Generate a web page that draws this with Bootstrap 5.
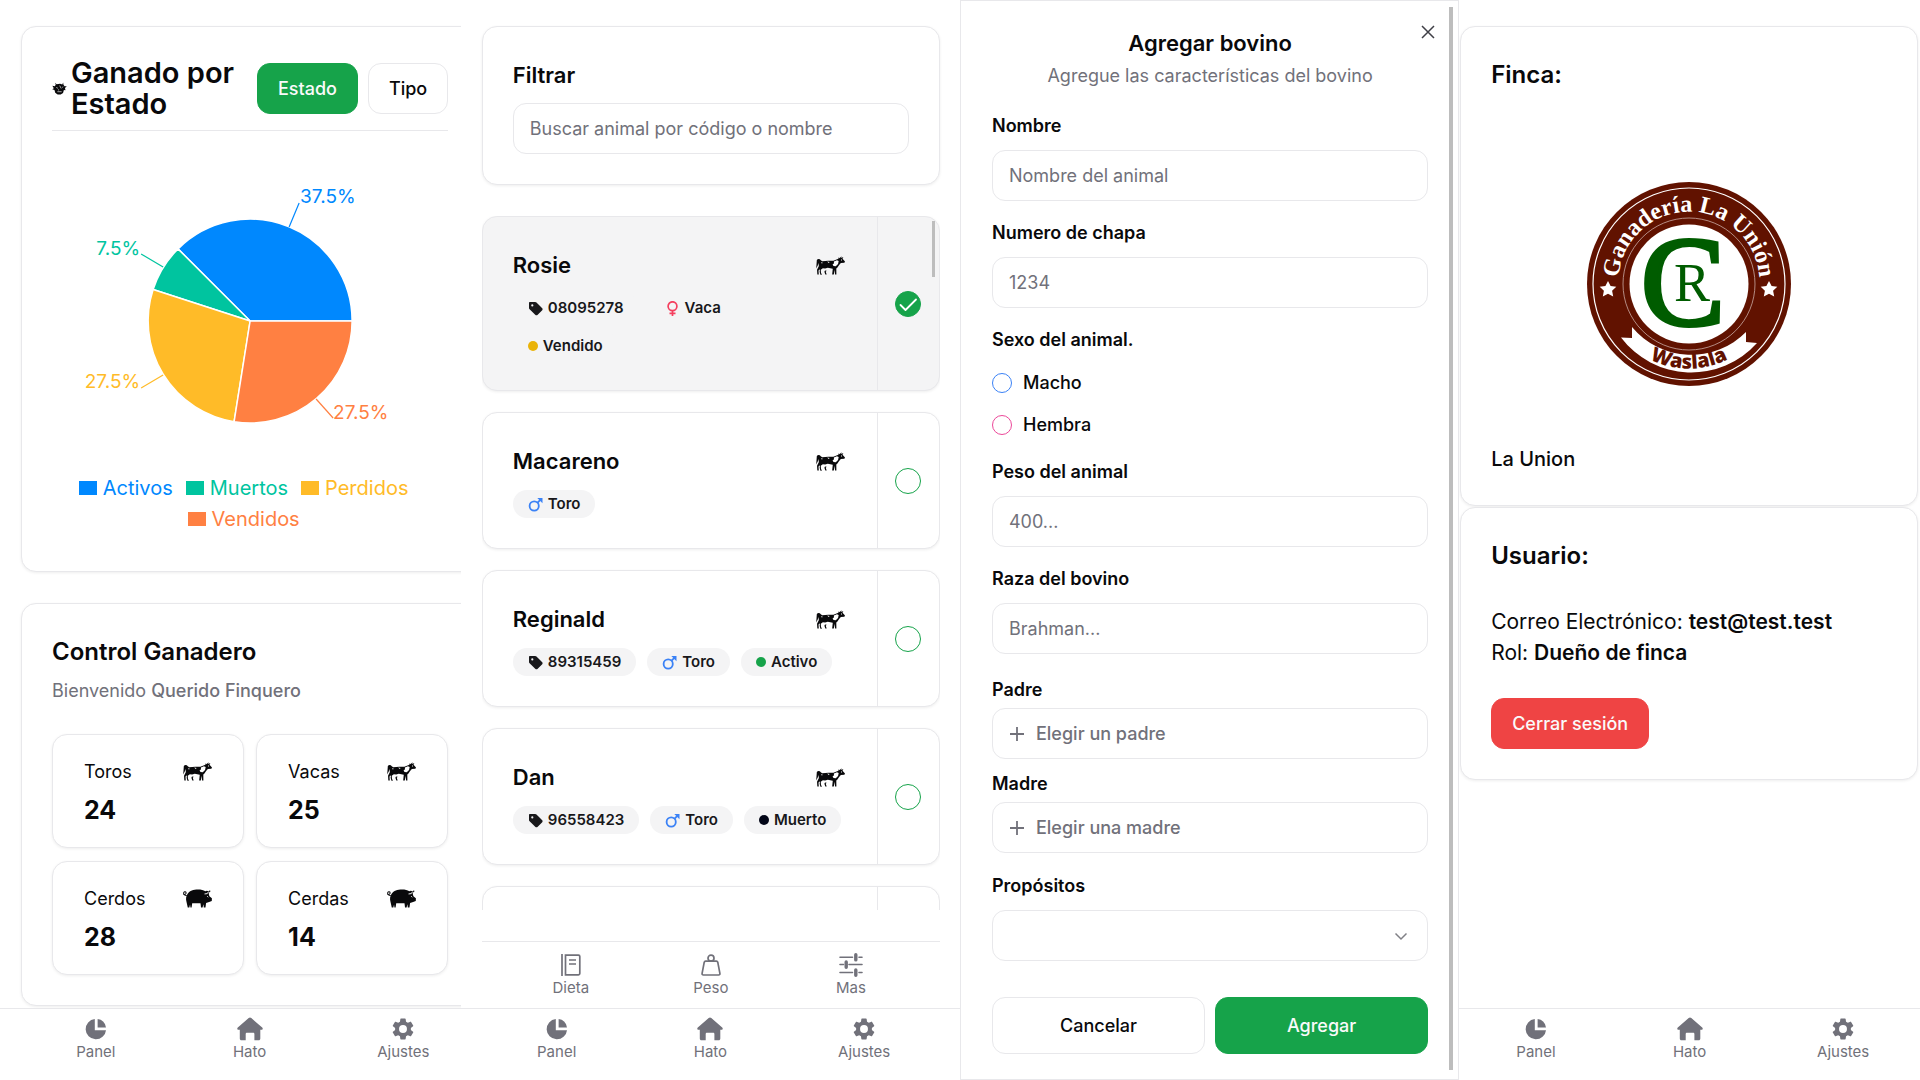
<!DOCTYPE html>
<html lang="es">
<head>
<meta charset="utf-8">
<meta name="viewport" content="width=device-width, initial-scale=1">
<title>Control Ganadero</title>
<link href="https://cdn.jsdelivr.net/npm/bootstrap@5.3.0/dist/css/bootstrap.min.css" rel="stylesheet">
<style>
:root{--ink:#09090b;--muted:#71717a;--line:#e8e8eb;--green:#16a34a;--soft:#f4f4f5}
body{font-family:Inter,"Liberation Sans",sans-serif;font-size:20px;line-height:31px;color:var(--ink);background:#fff}
.board{height:100vh;overflow:hidden}
.phone{height:100vh;overflow:hidden;flex:none;position:relative}
.phone-edge{width:24%}
.phone-full{width:26%}
.phone-edge>.clipped{width:108.34%}
.stack{padding:26px 20px 0 21px}
.panel{border:1px solid var(--line);border-radius:15px;background:#fff;box-shadow:0 1px 3px rgba(0,0,0,.07)}
.panel-pad{padding:30px}
.panel-next{margin-top:31px}
h1,h2,h3,p{margin:0}
.t-xl{font-size:29px;line-height:31px;font-weight:600}
.t-lg{font-size:24px;line-height:36px;font-weight:600}
.t-md{font-size:22px;line-height:36px;font-weight:600}
.t-sm{font-size:18px;line-height:25px}
.soft-text{color:var(--muted)}
.btn{--bs-btn-font-size:18px;--bs-btn-line-height:25px;--bs-btn-font-weight:500;--bs-btn-padding-x:20px;--bs-btn-padding-y:12px;--bs-btn-border-radius:13px}
.btn-main{--bs-btn-bg:var(--green);--bs-btn-color:#fafafa;--bs-btn-border-color:var(--green)}
.btn-plain{--bs-btn-bg:#fff;--bs-btn-color:#09090b;--bs-btn-border-color:var(--line)}
.btn-out{--bs-btn-bg:#ef4444;--bs-btn-color:#fafafa;--bs-btn-border-color:#ef4444;margin-top:30px}
.btn-tall{--bs-btn-padding-y:15px}
.pair{gap:10px}
.rule{border-bottom:1px solid var(--line);padding-bottom:11px}
.legend{font-size:20px;line-height:31px;padding:0 20px 6px}
.legend span{margin-right:13px}
.swatch{width:18px;height:14px;display:inline-block;margin-right:6px}
.tiles{display:grid;grid-template-columns:1fr 1fr;gap:13px 12px;margin-top:31px}
.tile{padding:24px 31px 19px}
.tile b{font-size:25px;line-height:36px;font-weight:700;display:block;margin-top:8px}
.tabs{border-top:1px solid var(--line);height:72px;padding:8px 19px 0;background:#fff}
.tabs-fit{padding-left:0;padding-right:0}
.tabs a{flex:1;color:var(--muted);font-size:15px;line-height:20px;text-decoration:none;text-align:center}
.tabs svg{display:block;margin:0 auto 1px}
.form-control,.form-select{border:1px solid var(--line);border-radius:13px;height:51px;padding:0 16px;font-size:18px;line-height:25px;color:var(--ink);background-color:#fff}
.form-control::placeholder{color:var(--muted);opacity:1}
.filter{margin-bottom:31px}
.filter label{display:block;margin-bottom:10px}
.herd{overflow:hidden;flex:1 1 0;min-height:0;position:relative}
.animal{margin-bottom:21px}
.animal-body{flex:1;padding:30px 32px 30px 30px}
.animal-pick{width:62px;border-left:1px solid var(--line)}
.picked{background:var(--soft)}
.form-check-input.pick{width:26px;height:26px;margin:0;border:1px solid var(--green);border-radius:50%;float:none}
.form-check-input.pick:checked{background-color:var(--green);background-size:26px;background-image:url("data:image/svg+xml,%3Csvg xmlns='http://www.w3.org/2000/svg' viewBox='0 0 26 26'%3E%3Cpath d='M5.500 14l5 5L21 8.500' fill='none' stroke='%23fff' stroke-width='1.800' stroke-linecap='round' stroke-linejoin='round'/%3E%3C/svg%3E")}
.chips{gap:10px 11px;margin-top:11px}
.chip{background:var(--soft);border-radius:14px;height:28px;padding:0 15px;font-size:15px;line-height:28px;font-weight:600;color:#18181b;display:flex;align-items:center;gap:5px}
.dot{width:10px;height:10px;border-radius:50%}
.thumb{position:absolute;width:3px;background:#bdbdbd}
.thumb-list{right:5px;top:5px;height:56px}
.thumb-form{right:5px;top:6px;bottom:9px;width:4px}
.subtabs{margin:31px 20px 0 21px;height:67px;padding-top:11px}
.sheet{border:1px solid var(--line);padding:24px 30px 0 31px}
.sheet-head{margin-bottom:25px}
.sheet-head p{margin-top:2px}
.close-x{position:absolute;right:19px;top:20px;padding:4px;border:0;background:none;line-height:0;color:#3f3f46}
.field{margin-bottom:19px}
.field label,.field legend,.field-tight label{display:block;font-size:18px;line-height:25px;font-weight:600;margin:0 0 12px}
.field-tight{margin-bottom:12px}
.field-tight label{margin-bottom:6px}
.parents{padding:4px 0 8px}
.picker{color:var(--muted);text-align:left;display:flex;align-items:center;gap:11px;width:100%;font-weight:500}
.form-select{background-image:url("data:image/svg+xml,%3Csvg xmlns='http://www.w3.org/2000/svg' viewBox='0 0 14 14'%3E%3Cpath d='M1.500 4.500l5.500 5.500 5.500-5.500' fill='none' stroke='%23808086' stroke-width='1.500'/%3E%3C/svg%3E");background-size:14px;background-position:right 19px center}
.sexes label{font-weight:500;margin:0}
.sexes{display:grid;gap:17px;padding:6px 0 3px}
.sexes>div{gap:11px}
.form-check-input.sex{width:20px;height:20px;margin:0;border:1px solid #3b82f6}
.form-check-input.sex-f{border-color:#ec4899}
.actions{margin-top:36px}
.farm{padding:26px 2px 0 1px}
.farm .panel{margin-bottom:1px}
.crest{display:block;margin:88px auto 57px}
.strong-name{font-weight:500}
.account{font-size:21px;margin-top:32px}
</style>
</head>
<body>
<svg width="0" height="0" class="position-absolute" aria-hidden="true">
  <symbol id="cow" viewBox="0 0 28 18">
    <path fill="currentColor" d="M.8 3.600C1.800 2.400 3.800 2.600 4.600 3.900L6 4.800l5.800-.4 5-.1 4.800-1.800.4-1.500.8 1L24.600 0l-.2 1.800L26.400.8l-.8 1.700L28 5.200l-.6 1.200-3.400.1-1.700 2.100-1.600 2.300-1.100 1.100.1 5.800h-1.300l-.5-4.800-.7 4.800h-1.600l.6-5.700-4.800-1-2.600.9-2.200-.4-2 1.600.2 2.800.9 2H4.300L3.500 15l.4-2.500-1.500 1.400.3 3.900H1.300L1 13.200 2.800 9.600 2.200 6.500 1.700 9 .2 11.800z"/>
    <path fill="#fff" d="M17.300 5.200l2.900-1.200 1.700.7-.6 2.800-2.200 2.300-2.200-.3-.9-1.700 1.300-.8zM4.800 5.800l1.600.2-.6 1.200zM10.800 5.200l2.400.4-1 1z"/>
    <path fill="currentColor" d="M8.700 13.800l1.700.3-1 1 .9 2.700H9l-.9-2.700z"/>
    <path fill="#fff" d="M24.200 3.300h.9v.8h-.9z"/>
  </symbol>
  <symbol id="pig" viewBox="0 0 28 18">
    <path fill="currentColor" d="M4.500 4.500C6.500 1.200 10 .2 14.500.2c3 0 5.300.6 7 1.700l1.500-.3 2.400.6-.6 2.200.7 2.500 2.400 1.800-.1 2.800-2.600.9-2.900 1-.6 4.300h-1.600l-.4-3.200-.8 3.200h-1.500l-.5-4.200-8 .1-.6 4.100H7.200l-.4-3-.7 3H4.600L3.300 12C2.600 9.200 2.900 6.700 4.500 4.500z"/>
    <path d="M3.600 6.200C1.500 6 .3 4.800.7 3.300 1.300 2 3.300 2.400 2.900 4c-.3 1-1.400 1.300-2.500 1.100M24.500 3l1.800-1.500" fill="none" stroke="currentColor"/>
    <path d="M20.800 4.600l2.600-.3 1.300-1.900M23.400 6.800l.9 1" fill="none" stroke="#fff" stroke-width=".9"/>
  </symbol>
  <symbol id="bull" viewBox="0 0 14 12">
    <path fill="currentColor" d="M.3 3.500L2.600 4 3.500 2.600 2.800.6 4.300 2 7.500 1.500l2.100.8L10.400.3l.3 2.300 1 1.300L13.800 4l-1.700 1.500.5 2.200-1.500-.4-.8 2.800-2.200 1.400H5.300L3 10 2.300 7.400.2 6.600l1.500-.9z"/>
    <path d="M4 5l1.500.8M7.200 3.300L8.600 6M9.500 5l1-.6M5 9h4M5.600 7.300h1" stroke="#fff" stroke-width=".6" fill="none"/>
  </symbol>
  <symbol id="pie" viewBox="0 0 22 22"><path fill="currentColor" d="M9.800 1v11.200H21A10.200 10.200 0 1 1 9.800 1z"/><path fill="currentColor" d="M12.600 1A9.200 9.200 0 0 1 21 9.400h-8.400z"/></symbol>
  <symbol id="home" viewBox="0 0 26 24"><path fill="currentColor" d="M11.700 1a2 2 0 0 1 2.600 0l10.900 9.600c1 .9.500 2.100-.8 2.100h-1.100v8.800c0 1.200-.6 1.800-1.700 1.800h-4.200v-6.100c0-.9-.5-1.400-1.300-1.400H10c-.8 0-1.300.5-1.300 1.400v6.100H4.500c-1.100 0-1.700-.6-1.700-1.800v-8.800H1.600c-1.300 0-1.800-1.200-.8-2.100z"/></symbol>
  <symbol id="gear" viewBox="2 2 20 20"><path fill="currentColor" d="M19.140 12.940c.04-.3.060-.61.060-.94s-.02-.64-.07-.94l2.030-1.580a.49.490 0 0 0 .12-.61l-1.920-3.320a.488.488 0 0 0-.59-.22l-2.390.96c-.5-.38-1.030-.7-1.620-.94l-.36-2.540a.484.484 0 0 0-.48-.41h-3.840c-.24 0-.43.17-.47.410l-.36 2.540c-.59.240-1.130.57-1.620.94l-2.390-.96c-.22-.08-.47 0-.59.220L2.740 8.870c-.12.210-.08.470.12.610l2.030 1.580c-.05.3-.09.630-.09.940s.02.640.07.940l-2.030 1.580a.49.490 0 0 0-.12.610l1.920 3.320c.12.220.37.290.59.220l2.390-.96c.5.380 1.030.7 1.620.94l.36 2.540c.05.240.24.410.48.410h3.840c.24 0 .44-.17.47-.41l.36-2.540c.59-.24 1.130-.56 1.620-.94l2.390.96c.22.080.47 0 .59-.22l1.920-3.320c.12-.22.070-.47-.12-.61zM12 15.600A3.600 3.600 0 1 1 12 8.400a3.600 3.600 0 0 1 0 7.200z"/></symbol>
  <symbol id="book" viewBox="0 0 20 22"><path d="M1 0v22M4.500 1.200h13c.8 0 1.300.5 1.300 1.300v17c0 .8-.5 1.300-1.300 1.300h-13zM8 6h7M8 10h7" fill="none" stroke="currentColor" stroke-width="1.700"/></symbol>
  <symbol id="weight" viewBox="0 0 20 22"><circle cx="10" cy="4.200" r="3" fill="none" stroke="currentColor" stroke-width="1.700"/><path d="M4.600 7.200h10.800c.7 0 1.200.4 1.400 1.100l2.100 11c.2 1-.3 1.700-1.300 1.700H2.400c-1 0-1.500-.7-1.300-1.700l2.100-11c.2-.7.700-1.100 1.400-1.100z" fill="none" stroke="currentColor" stroke-width="1.700" stroke-linejoin="round"/></symbol>
  <symbol id="sliders" viewBox="0 0 24 24"><path d="M1 4.300h12.500M20 4.300h3M1 11.500h3.500M10 11.500h13M1 19.500h12.500M20 19.500h3" stroke="currentColor" stroke-width="1.600" stroke-linecap="round"/><path d="M16.800 1.700v5.200M7.200 9v5.200M16.800 17v5.200" stroke="currentColor" stroke-width="3.400" stroke-linecap="round"/></symbol>
  <symbol id="tag" viewBox="0 0 15 15"><path fill="currentColor" fill-rule="evenodd" d="M2 1h5.200c.5 0 .9.200 1.300.5l5.500 5.400c.8.800.8 1.700 0 2.500l-4.300 4.300c-.8.800-1.700.8-2.500 0L1.600 8.300C1.200 7.900 1 7.500 1 7V2c0-.6.400-1 1-1zm2.300 2.300a1.100 1.100 0 1 0 0 2.200 1.100 1.100 0 0 0 0-2.200z"/></symbol>
  <symbol id="male" viewBox="0 0 15 15"><circle cx="6.200" cy="9" r="4.600" fill="none" stroke="#3b82f6" stroke-width="1.800"/><path d="M9.400 5.800L13 2.200" stroke="#3b82f6" stroke-width="1.800"/><path d="M9.300 1h5.200v5.200z" fill="#3b82f6"/></symbol>
  <symbol id="female" viewBox="0 0 15 15"><circle cx="7.500" cy="5.200" r="4.400" fill="none" stroke="#f43f5e" stroke-width="1.700"/><path d="M7.500 9.600V15M4.500 12.300h6" stroke="#f43f5e" stroke-width="1.700"/></symbol>
  <symbol id="plus" viewBox="0 0 16 16"><path d="M8 1v14M1 8h14" stroke="currentColor" stroke-width="1.800"/></symbol>
</svg>

<main class="board d-flex">

  <!-- Panel -->
  <section class="phone phone-edge">
    <div class="clipped h-100 d-flex flex-column">
      <div class="stack flex-grow-1">
        <div class="panel panel-pad">
          <div class="rule d-flex align-items-center">
            <svg class="flex-shrink-0 me-1" width="15" height="13"><use href="#bull"/></svg>
            <h1 class="t-xl flex-grow-1">Ganado por<br>Estado</h1>
            <div class="d-flex pair">
              <button class="btn btn-main" type="button">Estado</button>
              <button class="btn btn-plain" type="button">Tipo</button>
            </div>
          </div>
          <svg class="d-block mx-auto mt-5" width="100%" height="294" viewBox="0 0 396 294" font-family="Inter, sans-serif" font-size="19">
            <g transform="translate(198 142)" stroke="#fff" stroke-width="1.500" stroke-linejoin="round">
              <path fill="#0088fe" d="M0 0H102A102 102 0 0 0-72.100-72.100z"/>
              <path fill="#00c49f" d="M0 0L-72.100-72.100A102 102 0 0 0-97-31.500z"/>
              <path fill="#ffbb28" d="M0 0L-97-31.500A102 102 0 0 0-16 100.700z"/>
              <path fill="#ff8042" d="M0 0L-16 100.700A102 102 0 0 0 102 0z"/>
            </g>
            <g fill="none" stroke-width="1.200">
              <path stroke="#0088fe" d="M237 48l10-24"/>
              <path stroke="#00c49f" d="M111 88L89 75"/>
              <path stroke="#ffbb28" d="M111 196l-22 13"/>
              <path stroke="#ff8042" d="M264 220l17 19"/>
            </g>
            <text x="248" y="24" fill="#0088fe">37.5%</text>
            <text x="88" y="76" fill="#00c49f" text-anchor="end">7.5%</text>
            <text x="88" y="209" fill="#ffbb28" text-anchor="end">27.5%</text>
            <text x="281" y="240" fill="#ff8042">27.5%</text>
          </svg>
          <div class="legend d-flex flex-wrap justify-content-center">
            <span style="color:#0088fe"><i class="swatch" style="background:#0088fe"></i>Activos</span>
            <span style="color:#00c49f"><i class="swatch" style="background:#00c49f"></i>Muertos</span>
            <span style="color:#ffbb28"><i class="swatch" style="background:#ffbb28"></i>Perdidos</span>
            <span style="color:#ff8042"><i class="swatch" style="background:#ff8042"></i>Vendidos</span>
          </div>
        </div>
        <div class="panel panel-pad panel-next">
          <h2 class="t-lg">Control Ganadero</h2>
          <p class="t-sm soft-text mt-2">Bienvenido <span class="fw-medium">Querido Finquero</span></p>
          <div class="tiles">
            <div class="panel tile"><div class="d-flex justify-content-between align-items-center t-sm">Toros<svg width="29" height="19"><use href="#cow"/></svg></div><b>24</b></div>
            <div class="panel tile"><div class="d-flex justify-content-between align-items-center t-sm">Vacas<svg width="29" height="19"><use href="#cow"/></svg></div><b>25</b></div>
            <div class="panel tile"><div class="d-flex justify-content-between align-items-center t-sm">Cerdos<svg width="29" height="19"><use href="#pig"/></svg></div><b>28</b></div>
            <div class="panel tile"><div class="d-flex justify-content-between align-items-center t-sm">Cerdas<svg width="29" height="19"><use href="#pig"/></svg></div><b>14</b></div>
          </div>
        </div>
      </div>
      <nav class="tabs d-flex flex-shrink-0">
        <a href="#"><svg width="22" height="24"><use href="#pie"/></svg>Panel</a>
        <a href="#"><svg width="26" height="24"><use href="#home"/></svg>Hato</a>
        <a href="#"><svg width="22" height="24"><use href="#gear"/></svg>Ajustes</a>
      </nav>
    </div>
  </section>

  <!-- Hato -->
  <section class="phone phone-full d-flex flex-column">
    <div class="stack flex-grow-1 d-flex flex-column">
      <div class="panel panel-pad filter">
        <label for="buscar" class="t-md">Filtrar</label>
        <input id="buscar" class="form-control" type="search" placeholder="Buscar animal por código o nombre">
      </div>
      <div class="herd">
        <article class="panel animal picked d-flex">
          <div class="animal-body">
            <div class="d-flex justify-content-between align-items-center"><h3 class="t-md">Rosie</h3><svg width="29" height="19"><use href="#cow"/></svg></div>
            <div class="chips d-flex flex-wrap">
              <span class="chip"><svg width="15" height="15"><use href="#tag"/></svg>08095278</span>
              <span class="chip"><svg width="15" height="15"><use href="#female"/></svg>Vaca</span>
              <span class="chip"><i class="dot" style="background:#eab308"></i>Vendido</span>
            </div>
          </div>
          <div class="animal-pick d-flex align-items-center justify-content-center"><input class="form-check-input pick" type="checkbox" aria-label="Rosie" checked></div>
        </article>
        <article class="panel animal d-flex">
          <div class="animal-body">
            <div class="d-flex justify-content-between align-items-center"><h3 class="t-md">Macareno</h3><svg width="29" height="19"><use href="#cow"/></svg></div>
            <div class="chips d-flex flex-wrap">
              <span class="chip"><svg width="15" height="15"><use href="#male"/></svg>Toro</span>
            </div>
          </div>
          <div class="animal-pick d-flex align-items-center justify-content-center"><input class="form-check-input pick" type="checkbox" aria-label="Macareno"></div>
        </article>
        <article class="panel animal d-flex">
          <div class="animal-body">
            <div class="d-flex justify-content-between align-items-center"><h3 class="t-md">Reginald</h3><svg width="29" height="19"><use href="#cow"/></svg></div>
            <div class="chips d-flex flex-wrap">
              <span class="chip"><svg width="15" height="15"><use href="#tag"/></svg>89315459</span>
              <span class="chip"><svg width="15" height="15"><use href="#male"/></svg>Toro</span>
              <span class="chip"><i class="dot" style="background:#16a34a"></i>Activo</span>
            </div>
          </div>
          <div class="animal-pick d-flex align-items-center justify-content-center"><input class="form-check-input pick" type="checkbox" aria-label="Reginald"></div>
        </article>
        <article class="panel animal d-flex">
          <div class="animal-body">
            <div class="d-flex justify-content-between align-items-center"><h3 class="t-md">Dan</h3><svg width="29" height="19"><use href="#cow"/></svg></div>
            <div class="chips d-flex flex-wrap">
              <span class="chip"><svg width="15" height="15"><use href="#tag"/></svg>96558423</span>
              <span class="chip"><svg width="15" height="15"><use href="#male"/></svg>Toro</span>
              <span class="chip"><i class="dot" style="background:#020617"></i>Muerto</span>
            </div>
          </div>
          <div class="animal-pick d-flex align-items-center justify-content-center"><input class="form-check-input pick" type="checkbox" aria-label="Dan"></div>
        </article>
        <article class="panel animal d-flex"><div class="animal-body"></div><div class="animal-pick"></div></article>
        <span class="thumb thumb-list"></span>
      </div>
    </div>
    <nav class="tabs subtabs d-flex flex-shrink-0">
      <a href="#"><svg width="20" height="24"><use href="#book"/></svg>Dieta</a>
      <a href="#"><svg width="20" height="24"><use href="#weight"/></svg>Peso</a>
      <a href="#"><svg width="24" height="24"><use href="#sliders"/></svg>Mas</a>
    </nav>
    <nav class="tabs d-flex flex-shrink-0">
      <a href="#"><svg width="22" height="24"><use href="#pie"/></svg>Panel</a>
      <a href="#"><svg width="26" height="24"><use href="#home"/></svg>Hato</a>
      <a href="#"><svg width="22" height="24"><use href="#gear"/></svg>Ajustes</a>
    </nav>
  </section>

  <!-- Agregar bovino -->
  <section class="phone phone-full sheet">
    <button class="close-x" type="button" aria-label="Cerrar"><svg width="14" height="14" viewBox="0 0 14 14"><path d="M1 1l12 12M13 1L1 13" stroke="currentColor" stroke-width="1.500"/></svg></button>
    <div class="text-center sheet-head">
      <h2 class="t-md">Agregar bovino</h2>
      <p class="t-sm soft-text">Agregue las características del bovino</p>
    </div>
    <form>
      <div class="field"><label for="nombre">Nombre</label><input id="nombre" class="form-control" placeholder="Nombre del animal"></div>
      <div class="field"><label for="chapa">Numero de chapa</label><input id="chapa" class="form-control" placeholder="1234"></div>
      <fieldset class="field">
        <legend>Sexo del animal.</legend>
        <div class="sexes">
          <div class="d-flex align-items-center"><input class="form-check-input sex" type="radio" name="sexo" id="macho"><label for="macho">Macho</label></div>
          <div class="d-flex align-items-center"><input class="form-check-input sex sex-f" type="radio" name="sexo" id="hembra"><label for="hembra">Hembra</label></div>
        </div>
      </fieldset>
      <div class="field"><label for="peso">Peso del animal</label><input id="peso" class="form-control" placeholder="400..."></div>
      <div class="field"><label for="raza">Raza del bovino</label><input id="raza" class="form-control" placeholder="Brahman..."></div>
      <div class="parents">
        <div class="field-tight"><label for="padre">Padre</label><button id="padre" type="button" class="form-control picker"><svg width="16" height="16"><use href="#plus"/></svg>Elegir un padre</button></div>
        <div class="field-tight"><label for="madre">Madre</label><button id="madre" type="button" class="form-control picker"><svg width="16" height="16"><use href="#plus"/></svg>Elegir una madre</button></div>
      </div>
      <div class="field"><label for="prop">Propósitos</label><select id="prop" class="form-select"><option></option></select></div>
      <div class="d-flex pair actions">
        <button class="btn btn-plain btn-tall w-50" type="button">Cancelar</button>
        <button class="btn btn-main btn-tall w-50" type="submit">Agregar</button>
      </div>
    </form>
    <span class="thumb thumb-form"></span>
  </section>

  <!-- Ajustes -->
  <section class="phone phone-edge d-flex flex-column">
    <div class="farm flex-grow-1">
      <div class="panel panel-pad">
        <h2 class="t-lg">Finca:</h2>
        <svg class="crest" width="206" height="206" viewBox="0 0 206 206" role="img" aria-label="Ganadería La Unión">
          <defs>
            <path id="arcTop" d="M33.500 113A70.500 70.500 0 1 1 172.500 113"/>
            <path id="arcLow" d="M24 134A85 85 0 0 0 182 134"/>
          </defs>
          <circle cx="103" cy="103" r="102" fill="#611200"/>
          <circle cx="103" cy="103" r="96" fill="none" stroke="#fff" stroke-width="1.200"/>
          <circle cx="103" cy="103" r="66" fill="none" stroke="#c9aaa3" stroke-width=".8"/>
          <circle cx="103" cy="103" r="59.500" fill="#fff"/>
          <path fill="#fff" d="M46 146V157L35 156.500A88 88 0 0 0 171 162L160 161V151A77 77 0 0 1 46 146z"/>
          <text font-family="Liberation Serif, serif" font-weight="700" font-size="24" fill="#fff" text-anchor="middle"><textPath href="#arcTop" startOffset="50%">Ganadería La Unión</textPath></text>
          <text font-family="Open Sans, sans-serif" font-weight="800" font-size="20" fill="#611200" text-anchor="middle"><textPath href="#arcLow" startOffset="50%">Waslala</textPath></text>
          <path fill="#fff" d="M22 100l2.600 5.100 5.700.7-4.200 4 1.100 5.700-5.200-2.800-5.200 2.800 1.100-5.700-4.200-4 5.700-.7z"/>
          <path fill="#fff" d="M183 100l2.600 5.100 5.700.7-4.200 4 1.100 5.700-5.200-2.800-5.200 2.800 1.100-5.700-4.200-4 5.700-.7z"/>
          <text x="97" y="144" font-family="Liberation Serif, serif" font-size="126" fill="#005c00" stroke="#005c00" stroke-width="4" text-anchor="middle">C</text>
          <text x="106" y="120" font-family="Liberation Serif, serif" font-size="54" fill="#005c00" text-anchor="middle">R</text>
        </svg>
        <p class="strong-name">La Union</p>
      </div>
      <div class="panel panel-pad">
        <h2 class="t-lg">Usuario:</h2>
        <p class="account">Correo Electrónico: <span class="fw-semibold">test@test.test</span><br>Rol: <span class="fw-semibold">Dueño de finca</span></p>
        <button class="btn btn-out" type="button">Cerrar sesión</button>
      </div>
    </div>
    <nav class="tabs tabs-fit d-flex flex-shrink-0">
      <a href="#"><svg width="22" height="24"><use href="#pie"/></svg>Panel</a>
      <a href="#"><svg width="26" height="24"><use href="#home"/></svg>Hato</a>
      <a href="#"><svg width="22" height="24"><use href="#gear"/></svg>Ajustes</a>
    </nav>
  </section>
</main>
<script src="https://cdn.jsdelivr.net/npm/bootstrap@5.3.0/dist/js/bootstrap.bundle.min.js"></script>
</body>
</html>
